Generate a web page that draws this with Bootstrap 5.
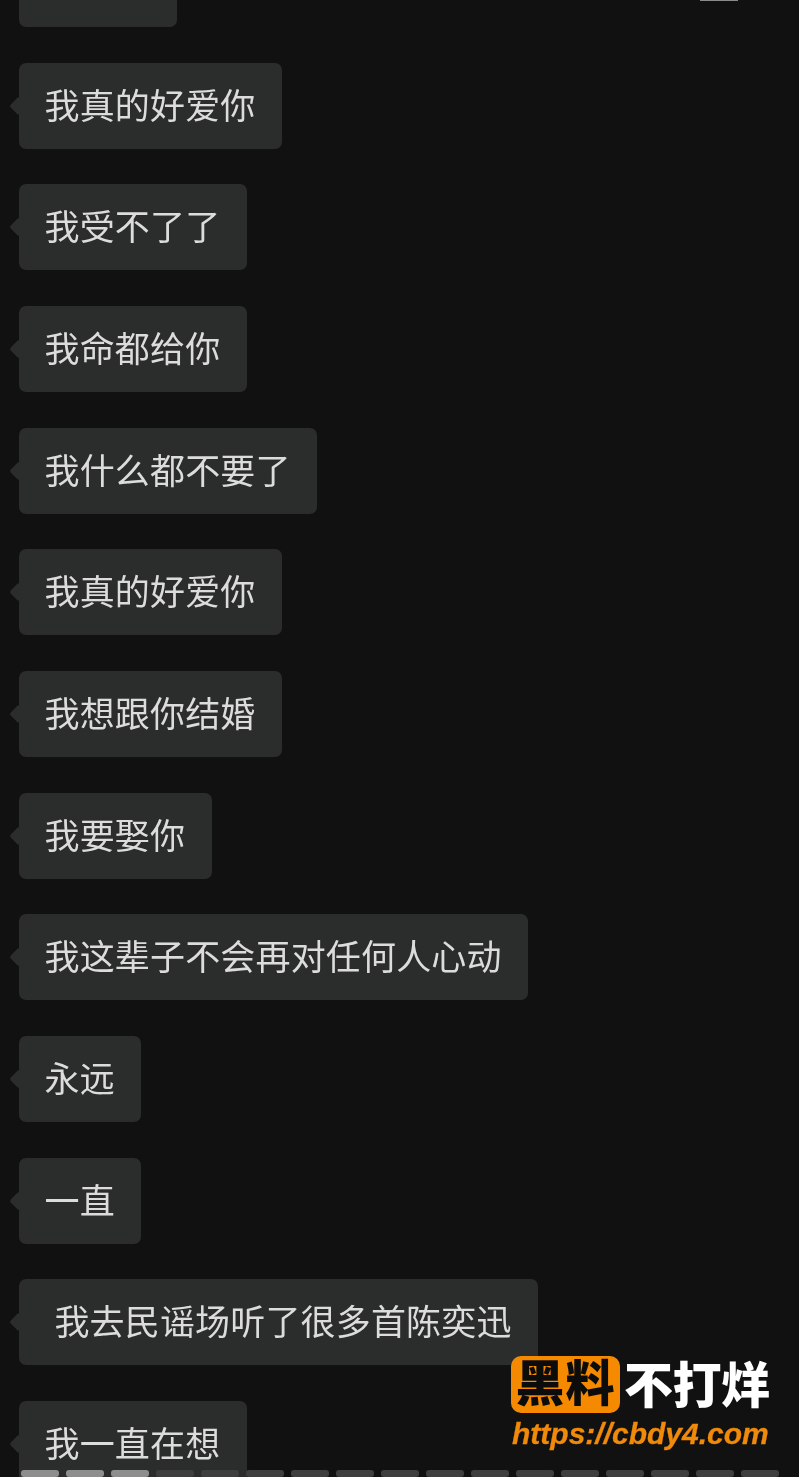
<!DOCTYPE html>
<html lang="zh">
<head>
<meta charset="utf-8">
<title>聊天记录</title>
<link rel="stylesheet" href="https://cdn.jsdelivr.net/npm/bootstrap@5.3.0/dist/css/bootstrap.min.css">
<style>
html, body { height: 100%; }
body { background: #111111; overflow: hidden; font-family: "Liberation Sans", "Noto Sans CJK SC", sans-serif; }
.chat-stage { width: 799px; height: 1477px; overflow: hidden; }
.chat-list { margin-top: -59px; padding-left: 19px; gap: 35.68px; filter: blur(.45px); }
.chat-bubble { height: 86px; background: #2b2c2c; color: #dcdcdc; border-radius: 7px; font-size: 35px; line-height: 1; padding: 1px 26.5px 0 25.5px; white-space: pre; letter-spacing: .17px; }
.chat-bubble::before { content: ""; position: absolute; left: -7px; top: 36px; width: 14px; height: 14px; background: #2b2c2c; transform: rotate(45deg); border-radius: 3px; }
.top-scrap { left: 700px; top: 0; width: 38px; height: 1px; background: #8a8a8a; filter: blur(.5px); }
.story-bar { left: 21px; bottom: 0; gap: 7px; height: 7px; }
.story-seg { width: 38px; height: 7px; border-radius: 3px; background: #3e3e3e; }
.story-seg.is-seen { background: #8e8e8e; }
.mark-logo { left: 511px; top: 1356px; width: 262px; filter: blur(.4px); }
.mark-badge { width: 109px; height: 57px; background: #f58a00; color: #0c0c0c; border-radius: 10px; font-size: 49px; font-weight: 900; line-height: 1; letter-spacing: 1px; }
.mark-side { color: #fff; font-size: 49px; font-weight: 900; line-height: 1; margin-left: 4px; padding-top: 6px; letter-spacing: -.5px; }
.mark-url { color: #f08a0a; font-family: "Liberation Sans", sans-serif; font-style: italic; font-weight: 700; font-size: 30px; line-height: 1; margin-top: 6px; margin-left: 1px; letter-spacing: 0; -webkit-text-stroke: .3px #f08a0a; }
</style>
</head>
<body>
<div class="chat-stage position-relative">
  <div class="chat-list d-flex flex-column align-items-start">
    <div class="chat-bubble position-relative d-flex align-items-center">我爱你</div>
    <div class="chat-bubble position-relative d-flex align-items-center">我真的好爱你</div>
    <div class="chat-bubble position-relative d-flex align-items-center">我受不了了</div>
    <div class="chat-bubble position-relative d-flex align-items-center">我命都给你</div>
    <div class="chat-bubble position-relative d-flex align-items-center">我什么都不要了</div>
    <div class="chat-bubble position-relative d-flex align-items-center">我真的好爱你</div>
    <div class="chat-bubble position-relative d-flex align-items-center">我想跟你结婚</div>
    <div class="chat-bubble position-relative d-flex align-items-center">我要娶你</div>
    <div class="chat-bubble position-relative d-flex align-items-center">我这辈子不会再对任何人心动</div>
    <div class="chat-bubble position-relative d-flex align-items-center">永远</div>
    <div class="chat-bubble position-relative d-flex align-items-center">一直</div>
    <div class="chat-bubble position-relative d-flex align-items-center"> 我去民谣场听了很多首陈奕迅</div>
    <div class="chat-bubble position-relative d-flex align-items-center">我一直在想</div>
  </div>
  <div class="top-scrap position-absolute"></div>
  <div class="story-bar position-absolute d-flex">
    <span class="story-seg is-seen"></span><span class="story-seg is-seen"></span><span class="story-seg is-seen"></span>
    <span class="story-seg"></span><span class="story-seg"></span><span class="story-seg"></span><span class="story-seg"></span><span class="story-seg"></span><span class="story-seg"></span><span class="story-seg"></span><span class="story-seg"></span><span class="story-seg"></span><span class="story-seg"></span><span class="story-seg"></span><span class="story-seg"></span><span class="story-seg"></span><span class="story-seg"></span>
  </div>
  <div class="mark-logo position-absolute">
    <div class="d-flex align-items-start">
      <div class="mark-badge d-flex align-items-center justify-content-center">黑料</div>
      <div class="mark-side">不打烊</div>
    </div>
    <div class="mark-url">https://cbdy4.com</div>
  </div>
</div>
<script src="https://cdn.jsdelivr.net/npm/bootstrap@5.3.0/dist/js/bootstrap.bundle.min.js"></script>
</body>
</html>
